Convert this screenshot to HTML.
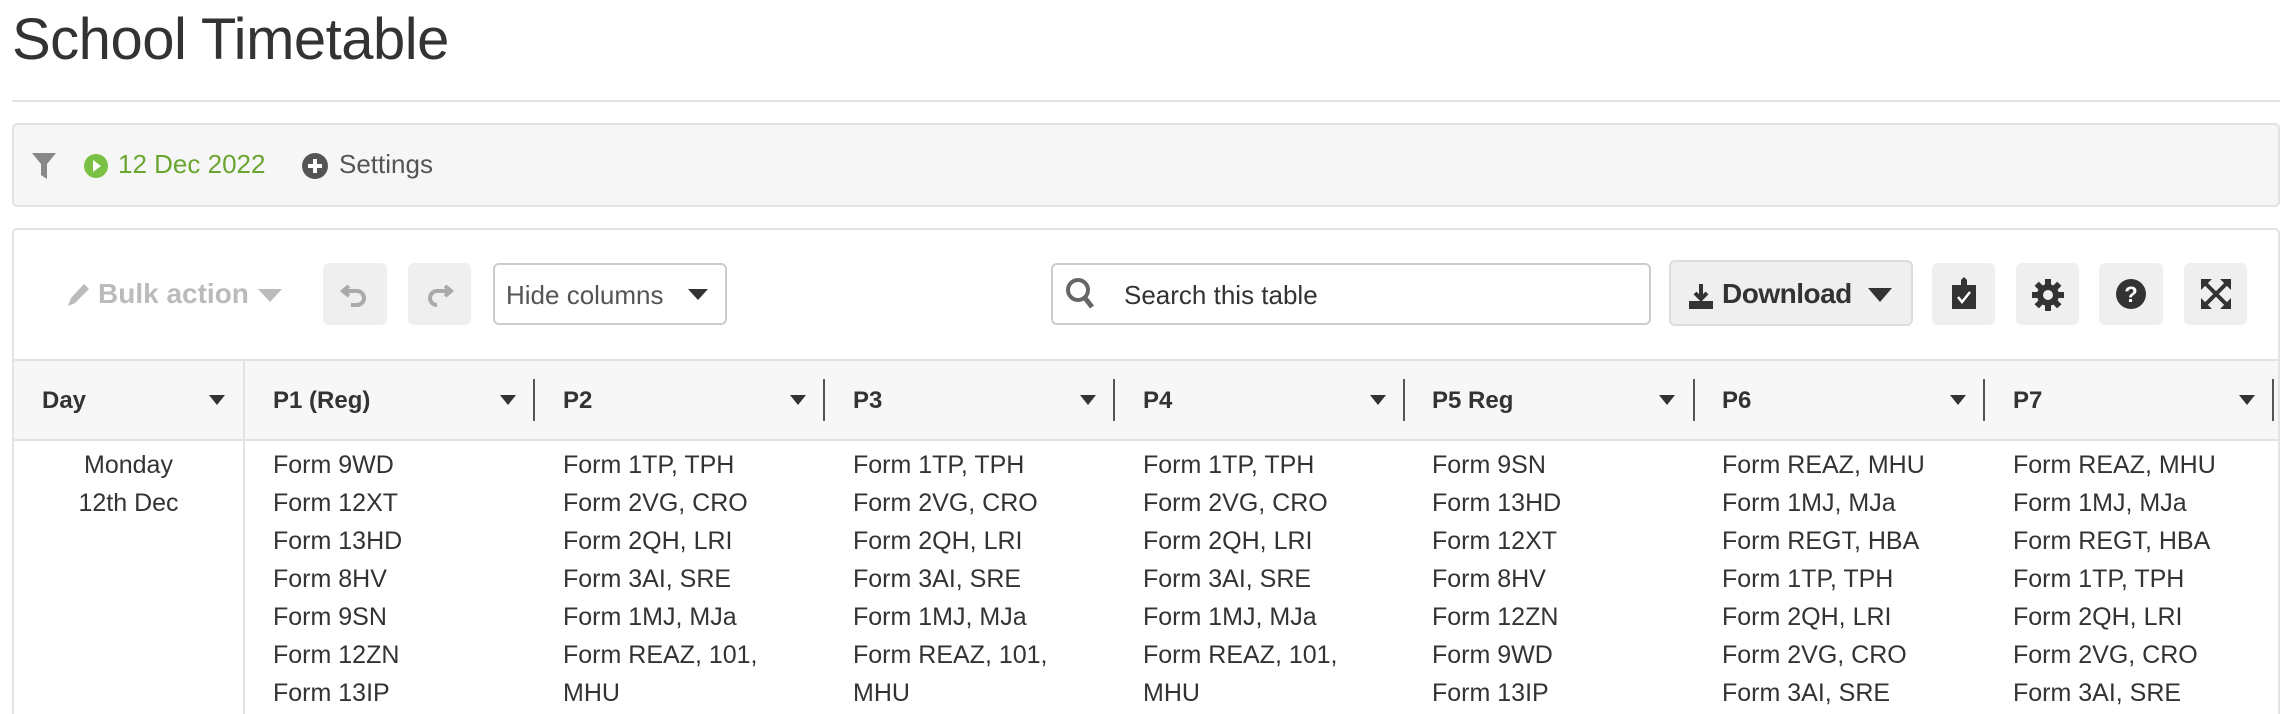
<!DOCTYPE html>
<html><head><meta charset="utf-8"><style>
*{box-sizing:border-box;margin:0;padding:0}
html{width:2292px;height:714px;overflow:hidden}
body{width:2292px;height:714px;overflow:hidden;background:#fff;font-family:"Liberation Sans",sans-serif;color:#333;position:relative}
.a{position:absolute}
h1{position:absolute;left:12px;top:6px;font-size:58px;font-weight:normal;color:#333;letter-spacing:-0.5px}
.hr{left:12px;top:100px;width:2268px;height:2px;background:#e3e3e3}
.filter{left:12px;top:123px;width:2268px;height:84px;background:#f6f6f6;border:2px solid #e3e3e3;border-radius:5px}
.panel{left:12px;top:228px;width:2268px;height:486px;border:2px solid #e3e3e3;border-bottom:none;border-radius:5px 5px 0 0}
.btn{position:absolute;top:263px;height:62px;background:#efefef;border-radius:6px}
.hdr{left:14px;top:359px;width:2264px;height:82px;background:#f7f7f7;border-top:2px solid #e3e3e3;border-bottom:2px solid #e3e3e3}
.hc{position:absolute;top:387px;font-size:24px;font-weight:bold;color:#333}
.tri{position:absolute;top:395px;width:0;height:0;border-left:8px solid transparent;border-right:8px solid transparent;border-top:10px solid #333}
.sep{position:absolute;top:379px;width:2px;height:42px;background:#555}
.col{position:absolute;top:446px;font-size:25px;line-height:38px;color:#333;white-space:nowrap}
</style></head><body>
<h1>School Timetable</h1>
<div class="a hr"></div>
<div class="a filter"></div>
<svg class="a" style="left:31px;top:152px" width="26" height="28" viewBox="0 0 26 28"><path d="M1 1h24l-9 11v15l-6-4V12z" fill="#888"/></svg>
<svg class="a" style="left:83px;top:153px" width="26" height="26"><circle cx="13" cy="13" r="12" fill="#7ac143"/><path d="M10 7l8 6-8 6z" fill="#fff"/></svg>
<div class="a" style="left:118px;top:149px;font-size:26px;color:#6ba531">12 Dec 2022</div>
<svg class="a" style="left:301px;top:152px" width="28" height="28"><circle cx="14" cy="14" r="13" fill="#555"/><path d="M14 7v14M7 14h14" stroke="#fff" stroke-width="4"/></svg>
<div class="a" style="left:339px;top:149px;font-size:26px;color:#555">Settings</div>
<div class="a panel"></div>
<svg class="a" style="left:64px;top:280px" width="28" height="30"><path d="M4 26l3-8L20 4l5 5L11 23z" fill="#bbb"/></svg>
<div class="a" style="left:98px;top:278px;font-size:28px;font-weight:bold;color:#bbb">Bulk action</div>
<div class="a" style="left:258px;top:289px;border-left:12px solid transparent;border-right:12px solid transparent;border-top:13px solid #bbb"></div>
<div class="btn" style="left:323px;width:64px"></div>
<svg class="a" style="left:339px;top:278px" width="32" height="32"><path d="M10 8L4 13l6 5M4 13h14a7 7 0 010 14h-6" fill="none" stroke="#aaa" stroke-width="4"/></svg>
<div class="btn" style="left:408px;width:63px"></div>
<svg class="a" style="left:423px;top:278px" width="32" height="32"><path d="M22 8l6 5-6 5M28 13H14a7 7 0 000 14h0" fill="none" stroke="#aaa" stroke-width="4"/></svg>
<div class="a" style="left:493px;top:263px;width:234px;height:62px;border:2px solid #ccc;border-radius:6px;background:#fff"></div>
<div class="a" style="left:506px;top:280px;font-size:26px;color:#555">Hide columns</div>
<div class="a" style="left:688px;top:289px;border-left:10px solid transparent;border-right:10px solid transparent;border-top:11px solid #333"></div>
<div class="a" style="left:1051px;top:263px;width:600px;height:62px;border:2px solid #ccc;border-radius:6px;background:#fff"></div>
<svg class="a" style="left:1065px;top:277px" width="32" height="34"><circle cx="13" cy="13" r="10" fill="none" stroke="#666" stroke-width="4"/><path d="M20 21l7 9" stroke="#666" stroke-width="5"/></svg>
<div class="a" style="left:1124px;top:280px;font-size:26px;color:#333">Search this table</div>
<div class="a" style="left:1669px;top:260px;width:244px;height:66px;background:#efefef;border:2px solid #ddd;border-radius:6px"></div>
<svg class="a" style="left:1688px;top:282px" width="26" height="28"><path d="M13 2v14M7 11l6 6 6-6" stroke="#333" stroke-width="4" fill="none"/><path d="M1 19h24v8H1z" fill="#333"/></svg>
<div class="a" style="left:1722px;top:278px;font-size:28px;font-weight:bold;color:#333;letter-spacing:-0.5px">Download</div>
<div class="a" style="left:1868px;top:288px;border-left:12px solid transparent;border-right:12px solid transparent;border-top:14px solid #333"></div>
<div class="btn" style="left:1932px;width:63px"></div>
<svg class="a" style="left:1950px;top:277px" width="28" height="34"><path d="M2 8h24v24H2z" fill="#333"/><path d="M11 3l3-3 3 3v6h-6z" fill="#333"/><path d="M8 20l4 5 8-10" stroke="#fff" stroke-width="2.5" fill="none"/></svg>
<div class="btn" style="left:2016px;width:63px"></div>
<svg class="a" style="left:2031px;top:278px" width="34" height="34" viewBox="0 0 34 34"><g fill="#333"><circle cx="17" cy="17" r="11"/><rect x="14" y="1" width="6" height="32"/><rect x="1" y="14" width="32" height="6"/><rect x="14" y="1" width="6" height="32" transform="rotate(45 17 17)"/><rect x="14" y="1" width="6" height="32" transform="rotate(-45 17 17)"/></g><circle cx="17" cy="17" r="5" fill="#efefef"/></svg>
<div class="btn" style="left:2099px;width:64px"></div>
<svg class="a" style="left:2115px;top:278px" width="32" height="32"><circle cx="16" cy="16" r="15" fill="#333"/><text x="16" y="24" text-anchor="middle" font-size="22" font-weight="bold" fill="#fff" font-family="Liberation Sans">?</text></svg>
<div class="btn" style="left:2184px;width:63px"></div>
<svg class="a" style="left:2199px;top:277px" width="34" height="34"><path d="M4 4l26 26M30 4L4 30" stroke="#333" stroke-width="4"/><path d="M2 2h11L2 13zM32 2H21l11 11zM2 32h11L2 21zM32 32H21l11-11z" fill="#333"/></svg>
<div class="a hdr"></div>
<div class="a" style="left:243px;top:359px;width:2px;height:355px;background:#e3e3e3"></div>
<div class="hc" style="left:42px">Day</div><div class="tri" style="left:209px"></div>
<div class="hc" style="left:273px">P1 (Reg)</div><div class="tri" style="left:500px"></div><div class="sep" style="left:533px"></div>
<div class="hc" style="left:563px">P2</div><div class="tri" style="left:790px"></div><div class="sep" style="left:823px"></div>
<div class="hc" style="left:853px">P3</div><div class="tri" style="left:1080px"></div><div class="sep" style="left:1113px"></div>
<div class="hc" style="left:1143px">P4</div><div class="tri" style="left:1370px"></div><div class="sep" style="left:1403px"></div>
<div class="hc" style="left:1432px">P5 Reg</div><div class="tri" style="left:1659px"></div><div class="sep" style="left:1693px"></div>
<div class="hc" style="left:1722px">P6</div><div class="tri" style="left:1950px"></div><div class="sep" style="left:1983px"></div>
<div class="hc" style="left:2013px">P7</div><div class="tri" style="left:2239px"></div><div class="sep" style="left:2272px"></div>
<div class="col" style="left:14px;width:229px;text-align:center">Monday<br>12th Dec</div>
<div class="col" style="left:273px">Form 9WD<br>Form 12XT<br>Form 13HD<br>Form 8HV<br>Form 9SN<br>Form 12ZN<br>Form 13IP</div>
<div class="col" style="left:563px">Form 1TP, TPH<br>Form 2VG, CRO<br>Form 2QH, LRI<br>Form 3AI, SRE<br>Form 1MJ, MJa<br>Form REAZ, 101,<br>MHU</div>
<div class="col" style="left:853px">Form 1TP, TPH<br>Form 2VG, CRO<br>Form 2QH, LRI<br>Form 3AI, SRE<br>Form 1MJ, MJa<br>Form REAZ, 101,<br>MHU</div>
<div class="col" style="left:1143px">Form 1TP, TPH<br>Form 2VG, CRO<br>Form 2QH, LRI<br>Form 3AI, SRE<br>Form 1MJ, MJa<br>Form REAZ, 101,<br>MHU</div>
<div class="col" style="left:1432px">Form 9SN<br>Form 13HD<br>Form 12XT<br>Form 8HV<br>Form 12ZN<br>Form 9WD<br>Form 13IP</div>
<div class="col" style="left:1722px">Form REAZ, MHU<br>Form 1MJ, MJa<br>Form REGT, HBA<br>Form 1TP, TPH<br>Form 2QH, LRI<br>Form 2VG, CRO<br>Form 3AI, SRE</div>
<div class="col" style="left:2013px">Form REAZ, MHU<br>Form 1MJ, MJa<br>Form REGT, HBA<br>Form 1TP, TPH<br>Form 2QH, LRI<br>Form 2VG, CRO<br>Form 3AI, SRE</div>
</body></html>
